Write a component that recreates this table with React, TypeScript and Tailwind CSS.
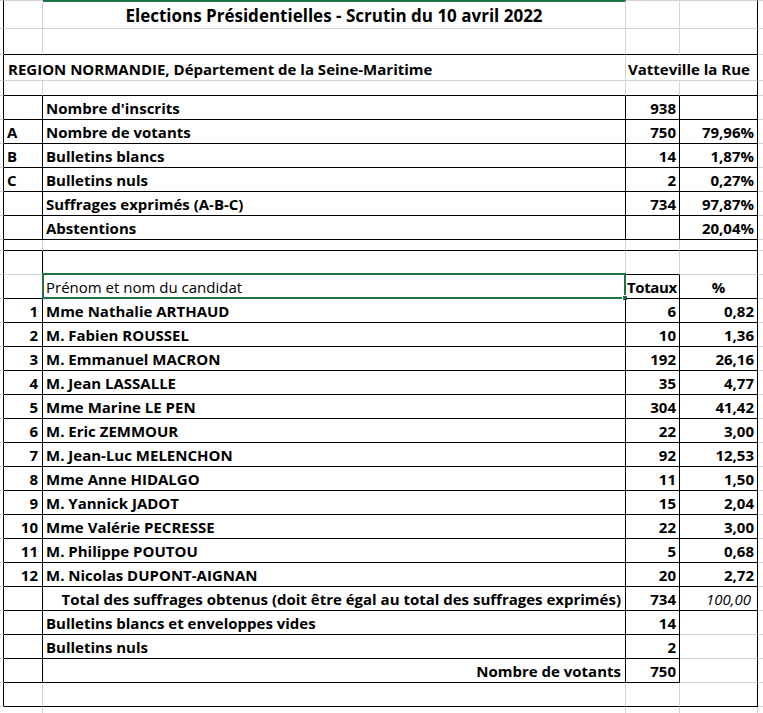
import type { ReactNode } from "react"
import clsx from "clsx"

type Line = "k" | "g" | "n"

const rightCls: Record<Line, string> = {
  k: "border-r border-r-black",
  g: "border-r border-r-[#d4d4d4]",
  n: "",
}

const bottomCls: Record<Line, string> = {
  k: "border-b border-b-black",
  g: "border-b border-b-[#d4d4d4]",
  n: "",
}

const widths = ["w-[39px]", "w-[583px]", "w-[54px]", "w-[78px]"]

type CellSpec = {
  r: Line
  b: Line
  className?: string
  children?: ReactNode
}

function Row({
  h,
  cells,
  lead = "k",
  leadB = "g",
  top = false,
}: {
  h: string
  cells: CellSpec[]
  lead?: Line
  leadB?: Line
  top?: boolean
}) {
  return (
    <div className={clsx("flex", h)}>
      <div className={clsx("w-[4px] shrink-0", rightCls[lead], bottomCls[leadB], top && "border-t border-t-[#d4d4d4]")} />
      {cells.map((c, i) => (
        <div
          key={i}
          className={clsx(
            "relative flex shrink-0 items-end whitespace-nowrap pb-[2px] leading-[18px]",
            widths[i],
            rightCls[c.r],
            bottomCls[c.b],
            top && (i === 1 ? "border-t-2 border-t-[#217346]" : "border-t border-t-[#d4d4d4]"),
            c.className,
          )}
        >
          {c.children}
        </div>
      ))}
      <div className={clsx("flex-1", bottomCls.g, top && "border-t border-t-[#d4d4d4]")} />
    </div>
  )
}

const stats = [
  { letter: "", label: "Nombre d'inscrits", value: "938", pct: "" },
  { letter: "A", label: "Nombre de votants", value: "750", pct: "79,96%" },
  { letter: "B", label: "Bulletins blancs", value: "14", pct: "1,87%" },
  { letter: "C", label: "Bulletins nuls", value: "2", pct: "0,27%" },
  { letter: "", label: "Suffrages exprimés (A-B-C)", value: "734", pct: "97,87%" },
  { letter: "", label: "Abstentions", value: "", pct: "20,04%" },
]

const candidates = [
  ["Mme Nathalie ARTHAUD", "6", "0,82"],
  ["M. Fabien ROUSSEL", "10", "1,36"],
  ["M. Emmanuel MACRON", "192", "26,16"],
  ["M. Jean LASSALLE", "35", "4,77"],
  ["Mme Marine LE PEN", "304", "41,42"],
  ["M. Eric ZEMMOUR", "22", "3,00"],
  ["M. Jean-Luc MELENCHON", "92", "12,53"],
  ["Mme Anne HIDALGO", "11", "1,50"],
  ["M. Yannick JADOT", "15", "2,04"],
  ["Mme Valérie PECRESSE", "22", "3,00"],
  ["M. Philippe POUTOU", "5", "0,68"],
  ["M. Nicolas DUPONT-AIGNAN", "20", "2,72"],
]

export default function App() {
  return (
    <div className="h-[713px] w-[763px] overflow-hidden bg-white font-['Open_Sans','Noto_Sans',sans-serif] text-[15px] text-black">
      {/* titre */}
      <Row
        h="h-[29px]"
        top
        cells={[
          { r: "g", b: "g" },
          {
            r: "g",
            b: "g",
            className: "justify-center pb-[3px] text-[17px] font-bold",
            children: "Elections Présidentielles - Scrutin du 10 avril 2022",
          },
          { r: "g", b: "g" },
          { r: "k", b: "g" },
        ]}
      />
      <Row h="h-[26px]" cells={[{ r: "g", b: "k" }, { r: "g", b: "k" }, { r: "g", b: "k" }, { r: "k", b: "k" }]} />
      <Row
        h="h-[26px]"
        cells={[
          {
            r: "n",
            b: "g",
            className: "pl-[4px] font-bold",
            children: "REGION NORMANDIE, Département de la Seine-Maritime",
          },
          { r: "g", b: "g" },
          { r: "n", b: "g", className: "pl-[2px] font-bold", children: "Vatteville la Rue" },
          { r: "k", b: "g" },
        ]}
      />
      <Row h="h-[15px]" cells={[{ r: "g", b: "k" }, { r: "g", b: "k" }, { r: "g", b: "k" }, { r: "k", b: "k" }]} />

      {stats.map((s) => (
        <Row
          key={s.label}
          h="h-[24px]"
          cells={[
            { r: "k", b: "k", className: "pl-[3px] font-bold", children: s.letter },
            { r: "k", b: "k", className: "pl-[3px] font-bold", children: s.label },
            { r: "k", b: "k", className: "justify-end pr-[3px] font-bold", children: s.value },
            { r: "k", b: "k", className: "justify-end pr-[3px] font-bold", children: s.pct },
          ]}
        />
      ))}

      <Row h="h-[11px]" cells={[{ r: "g", b: "k" }, { r: "g", b: "k" }, { r: "g", b: "k" }, { r: "k", b: "k" }]} />
      <Row h="h-[24px]" cells={[{ r: "k", b: "g" }, { r: "g", b: "k" }, { r: "g", b: "k" }, { r: "k", b: "g" }]} />

      {/* en-tête candidats, cellule sélectionnée */}
      <Row
        h="h-[24px]"
        cells={[
          { r: "k", b: "k" },
          {
            r: "k",
            b: "k",
            className: "pl-[3px]",
            children: (
              <>
                Prénom et nom du candidat
                <div className="absolute -top-[2px] -right-[1px] -bottom-[1px] -left-[1px] border-2 border-[#217346]" />
                <div className="absolute -right-[3px] -bottom-[3px] h-[6px] w-[6px] border border-white bg-[#217346]" />
              </>
            ),
          },
          { r: "k", b: "k", className: "pl-[1px] font-bold tracking-[-0.4px]", children: "Totaux" },
          { r: "k", b: "k", className: "justify-center font-bold", children: "%" },
        ]}
      />

      {candidates.map(([name, total, pct], i) => (
        <Row
          key={name}
          h="h-[24px]"
          cells={[
            { r: "k", b: "k", className: "justify-end pr-[4px] font-bold", children: i + 1 },
            { r: "k", b: "k", className: "pl-[3px] font-bold", children: name },
            { r: "k", b: "k", className: "justify-end pr-[3px] font-bold", children: total },
            { r: "k", b: "k", className: "justify-end pr-[3px] font-bold", children: pct },
          ]}
        />
      ))}

      <Row
        h="h-[24px]"
        cells={[
          { r: "k", b: "k" },
          {
            r: "k",
            b: "k",
            className: "justify-end pr-[4px] font-bold",
            children: "Total des suffrages obtenus (doit être égal au total des suffrages exprimés)",
          },
          { r: "k", b: "k", className: "justify-end pr-[3px] font-bold", children: "734" },
          { r: "k", b: "k", className: "justify-end pr-[6px] italic", children: "100,00" },
        ]}
      />
      <Row
        h="h-[24px]"
        cells={[
          { r: "k", b: "k" },
          { r: "k", b: "k", className: "pl-[3px] font-bold", children: "Bulletins blancs et enveloppes vides" },
          { r: "k", b: "k", className: "justify-end pr-[3px] font-bold", children: "14" },
          { r: "k", b: "g" },
        ]}
      />
      <Row
        h="h-[24px]"
        cells={[
          { r: "k", b: "k" },
          { r: "k", b: "k", className: "pl-[3px] font-bold", children: "Bulletins nuls" },
          { r: "k", b: "k", className: "justify-end pr-[3px] font-bold", children: "2" },
          { r: "k", b: "g" },
        ]}
      />
      <Row
        h="h-[24px]"
        cells={[
          { r: "k", b: "k" },
          { r: "k", b: "k", className: "justify-end pr-[4px] font-bold", children: "Nombre de votants" },
          { r: "k", b: "k", className: "justify-end pr-[3px] font-bold", children: "750" },
          { r: "k", b: "g" },
        ]}
      />
      <Row h="h-[24px]" cells={[{ r: "g", b: "k" }, { r: "g", b: "k" }, { r: "g", b: "k" }, { r: "k", b: "k" }]} />
      <Row h="h-[7px]" lead="n" leadB="n" cells={[{ r: "g", b: "n" }, { r: "g", b: "n" }, { r: "g", b: "n" }, { r: "g", b: "n" }]} />
    </div>
  )
}
